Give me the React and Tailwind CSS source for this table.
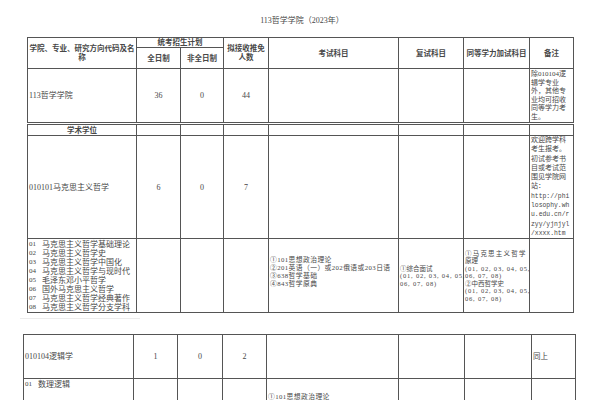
import React from 'react';

// 113 哲学学院 2023 招生目录（扫描页）
const cell = 'border border-[#555] p-0 align-middle';
const head = 'border border-[#555] p-0 align-middle text-center font-bold text-[7.5px] leading-[9px]';
const mono = "font-['Liberation_Mono','Noto_Sans_CJK_SC',monospace]";

const directions = [
    ['01', '马克思主义哲学基础理论'],
    ['02', '马克思主义哲学史'],
    ['03', '马克思主义哲学中国化'],
    ['04', '马克思主义哲学与现时代'],
    ['05', '毛泽东邓小平哲学'],
    ['06', '国外马克思主义哲学'],
    ['07', '马克思主义哲学经典著作'],
    ['08', '马克思主义哲学分支学科'],
];

const exams = ['①101思想政治理论', '②201英语（一）或202俄语或203日语', '③638哲学基础', '④843哲学原典'];

const note1 = ['除010104逻', '辑学专业', '外，其他专', '业均可招收', '同等学力考', '生。'];
const note2 = ['欢迎跨学科', '考生报考。', '初试参考书', '目或考试范', '围见学院网', '站：'];
const url = ['http://phi', 'losophy.wh', 'u.edu.cn/r', 'zyy/yjnjyl', '/xxxx.htm'];

const Codes = ({ a, b }) => (
    <>
        <div className="whitespace-nowrap tracking-[0.8px]">{a}</div>
        <div className="whitespace-nowrap tracking-[0.8px]">{b}</div>
    </>
);

const App = () => {
    return (
        <div className="w-[600px] h-[400px] overflow-hidden bg-white text-[#474747] font-['Liberation_Serif','Noto_Sans_CJK_SC',serif]">
            {/* Title */}
            <p className="pt-[16px] pl-[4px] text-center text-[8px] leading-[10px]">113哲学学院（2023年）</p>

            {/* Table 1 */}
            <table className="mt-[11px] ml-[27px] w-[546px] table-fixed border-collapse">
                <colgroup>
                    <col className="w-[109px]" />
                    <col className="w-[44px]" />
                    <col className="w-[43px]" />
                    <col className="w-[45px]" />
                    <col className="w-[130px]" />
                    <col className="w-[65px]" />
                    <col className="w-[66px]" />
                    <col className="w-[44px]" />
                </colgroup>
                <tbody>
                    <tr className="h-[10px]">
                        <td rowSpan={2} className={head}>学院、专业、研究方向代码及名<br />称</td>
                        <td colSpan={2} className={head}>统考招生计划</td>
                        <td rowSpan={2} className={head}>拟接收推免<br />人数</td>
                        <td rowSpan={2} className={head}>考试科目</td>
                        <td rowSpan={2} className={head}>复试科目</td>
                        <td rowSpan={2} className={head}>同等学力加试科目</td>
                        <td rowSpan={2} className={head}>备注</td>
                    </tr>
                    <tr className="h-[21px]">
                        <td className={head}>全日制</td>
                        <td className={head}>非全日制</td>
                    </tr>

                    <tr className="h-[55px] text-[8px] leading-[9px]">
                        <td className={`${cell} pl-[1px]`}>113哲学学院</td>
                        <td className={`${cell} text-center`}>36</td>
                        <td className={`${cell} text-center`}>0</td>
                        <td className={`${cell} text-center`}>44</td>
                        <td className={cell}></td>
                        <td className={cell}></td>
                        <td className={cell}></td>
                        <td className={`${cell} pl-[1px] text-[7px] leading-[8.5px]`}>
                            {note1.map((t) => <div key={t} className="whitespace-nowrap">{t}</div>)}
                        </td>
                    </tr>

                    <tr className="h-[12px] text-[7.5px] leading-[9px]">
                        <td className={`${cell} border-t-[3px] border-double text-center font-bold`}>学术学位</td>
                        <td className={`${cell} border-t-[3px] border-double`}></td>
                        <td className={`${cell} border-t-[3px] border-double`}></td>
                        <td className={`${cell} border-t-[3px] border-double`}></td>
                        <td className={`${cell} border-t-[3px] border-double`}></td>
                        <td className={`${cell} border-t-[3px] border-double`}></td>
                        <td className={`${cell} border-t-[3px] border-double`}></td>
                        <td className={`${cell} border-t-[3px] border-double`}></td>
                    </tr>

                    <tr className="h-[103px] text-[8px] leading-[9px]">
                        <td className={`${cell} pl-[1px]`}>010101马克思主义哲学</td>
                        <td className={`${cell} text-center`}>6</td>
                        <td className={`${cell} text-center`}>0</td>
                        <td className={`${cell} text-center`}>7</td>
                        <td className={cell}></td>
                        <td className={cell}></td>
                        <td className={cell}></td>
                        <td className={`${cell} pl-[1px] text-[7px] leading-[9.3px]`}>
                            {note2.map((t) => <div key={t} className="whitespace-nowrap">{t}</div>)}
                            {url.map((t) => <div key={t} className={`${mono} whitespace-nowrap text-[6.4px]`}>{t}</div>)}
                        </td>
                    </tr>

                    <tr className="h-[74px]">
                        <td className={`${cell} pl-[1px] text-[8px] leading-[9px]`}>
                            {directions.map(([n, t]) => (
                                <div key={n} className="flex whitespace-nowrap">
                                    <span className="w-[13px] text-[7px]">{n}</span>
                                    <span>{t}</span>
                                </div>
                            ))}
                        </td>
                        <td className={cell}></td>
                        <td className={cell}></td>
                        <td className={cell}></td>
                        <td className={`${cell} pl-[1px] pb-[8px] text-[6.8px] leading-[7.8px] tracking-[0.4px]`}>
                            {exams.map((t) => <div key={t} className="whitespace-nowrap">{t}</div>)}
                        </td>
                        <td className={`${cell} pl-[1px] text-[6.5px] leading-[7.5px]`}>
                            <div>①综合面试</div>
                            <Codes a="(01, 02, 03, 04, 05," b="06, 07, 08)" />
                        </td>
                        <td className={`${cell} pl-[1px] text-[6.5px] leading-[7.5px]`}>
                            <div className="whitespace-nowrap tracking-[1.2px]">①马克思主义哲学</div>
                            <div>原理</div>
                            <Codes a="(01, 02, 03, 04, 05," b="06, 07, 08)" />
                            <div>②中西哲学史</div>
                            <Codes a="(01, 02, 03, 04, 05," b="06, 07, 08)" />
                        </td>
                        <td className={cell}></td>
                    </tr>
                </tbody>
            </table>

            {/* gap with bleed-through marks */}
            <div className="h-[21px] pl-[20px] pt-[5px]">
                <div className="h-[1px] w-[120px] bg-[#ececec]" />
            </div>

            {/* Table 2 */}
            <table className="ml-[23px] w-[552px] table-fixed border-collapse">
                <colgroup>
                    <col className="w-[110px]" />
                    <col className="w-[44px]" />
                    <col className="w-[45px]" />
                    <col className="w-[44px]" />
                    <col className="w-[132px]" />
                    <col className="w-[66px]" />
                    <col className="w-[67px]" />
                    <col className="w-[44px]" />
                </colgroup>
                <tbody>
                    <tr className="h-[44px] text-[8px] leading-[9px]">
                        <td className={`${cell} pl-[1px]`}>010104逻辑学</td>
                        <td className={`${cell} text-center`}>1</td>
                        <td className={`${cell} text-center`}>0</td>
                        <td className={`${cell} text-center`}>2</td>
                        <td className={cell}></td>
                        <td className={cell}></td>
                        <td className={cell}></td>
                        <td className={`${cell} pl-[1px] text-[7.5px]`}>同上</td>
                    </tr>
                    <tr className="h-[60px] text-[8px] leading-[9px]">
                        <td className={`${cell} align-top pl-[1px] pt-[1px]`}>
                            <div className="flex whitespace-nowrap">
                                <span className="w-[13px] text-[7px]">01</span>
                                <span>数理逻辑</span>
                            </div>
                        </td>
                        <td className={cell}></td>
                        <td className={cell}></td>
                        <td className={cell}></td>
                        <td className={`${cell} align-top pl-[1px] pt-[14px] text-[6.8px] leading-[7.8px] tracking-[0.4px]`}>
                            <div className="whitespace-nowrap">①101思想政治理论</div>
                        </td>
                        <td className={cell}></td>
                        <td className={cell}></td>
                        <td className={cell}></td>
                    </tr>
                </tbody>
            </table>
        </div>
    );
};

export default App;
